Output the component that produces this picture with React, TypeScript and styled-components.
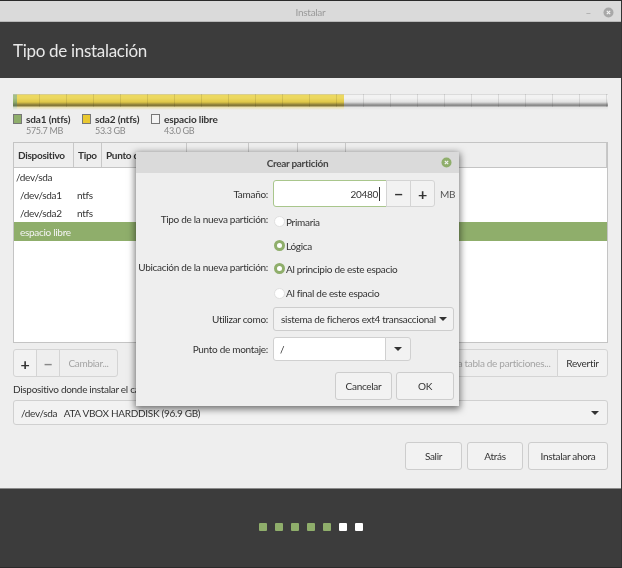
import styled, { createGlobalStyle } from "styled-components";

const GlobalStyle = createGlobalStyle`
    html, body {
        margin: 0;
        padding: 0;
        background: #eeeeee;
    }
    body {
        font-family: Lato, "Noto Sans", "Liberation Sans", sans-serif;
        font-size: 10px;
        letter-spacing: -0.3px;
        color: #333333;
    }
`;

const Window = styled.div`
    position: relative;
    width: 622px;
    height: 568px;
    box-sizing: border-box;
    overflow: hidden;
    display: flex;
    flex-direction: column;
    border-top: 1px solid #2a2a2a;
    border-right: 1px solid #333;
    filter: blur(0.3px);
`;

const TitleBar = styled.div`
    height: 21px;
    flex: none;
    display: flex;
    align-items: center;
    justify-content: center;
    position: relative;
    box-sizing: border-box;
    padding-top: 1px;
    background: #dadada;
    border-bottom: 1px solid #b8b8b8;
    color: #9a9a9a;
`;

const TitleButtons = styled.div`
    position: absolute;
    right: 7px;
    top: 5px;
    display: flex;
    align-items: center;
    gap: 12px;
    color: #a0a0a0;
`;

const Header = styled.div`
    height: 56px;
    flex: none;
    display: flex;
    align-items: center;
    padding: 1px 0 0 13px;
    box-sizing: border-box;
    background: #3c3c3c;
    color: #e8e8e8;
    font-size: 17px;
`;

const Content = styled.div`
    flex: 1;
    display: flex;
    flex-direction: column;
    padding: 16px 13px 0;
    background: #eeeeee;
`;

const Bar = styled.div`
    position: relative;
    display: flex;
    height: 16px;
    flex: none;

    &::after {
        content: "";
        position: absolute;
        inset: 0 0 3px;
        background: repeating-linear-gradient(90deg, transparent 0 13px, rgba(0, 0, 0, 0.1) 13px 13.5px);
    }
`;

const BarPart = styled.div<{ $w: number; $top: string; $mid: string; $dark: string; $fade: string }>`
    width: ${(p) => p.$w}px;
    flex: ${(p) => (p.$w ? "none" : 1)};
    background: linear-gradient(
        180deg,
        #c4c4c4 0,
        ${(p) => p.$top} 1px,
        ${(p) => p.$top} 4px,
        ${(p) => p.$mid} 8px,
        ${(p) => p.$dark} 11px,
        ${(p) => p.$dark} 12px,
        ${(p) => p.$fade} 13px,
        transparent 16px
    );
`;

const Legend = styled.div`
    display: flex;
    gap: 10px;
    margin-top: 2px;
    height: 30px;
    flex: none;
`;

const LegendItem = styled.div<{ $w: number }>`
    display: flex;
    gap: 4px;
    width: ${(p) => p.$w}px;
`;

const Swatch = styled.div<{ $color: string }>`
    width: 9px;
    height: 10px;
    margin-top: 2px;
    box-sizing: border-box;
    flex: none;
    background: ${(p) => p.$color};
    border: 1px solid #777;
`;

const LegendName = styled.div`
    font-weight: 700;
    line-height: 14px;
    letter-spacing: -0.15px;
    white-space: nowrap;
`;

const LegendSize = styled.div`
    font-size: 9px;
    line-height: 10px;
    color: #888;
`;

const Table = styled.div`
    height: 201px;
    flex: none;
    display: flex;
    flex-direction: column;
    background: #fff;
    border: 1px solid #c4c4c4;
    box-sizing: border-box;
`;

const TableHead = styled.div`
    display: flex;
    height: 24px;
    flex: none;
    background: #eeeeee;
    border-bottom: 1px solid #c4c4c4;
`;

const HeadCell = styled.div<{ $w?: number }>`
    width: ${(p) => (p.$w ? `${p.$w}px` : "auto")};
    flex: ${(p) => (p.$w ? "none" : 1)};
    box-sizing: border-box;
    padding-left: 4px;
    display: flex;
    align-items: center;
    font-weight: 700;
    white-space: nowrap;
    overflow: hidden;
    border-right: 1px solid #c8c8c8;
`;

const Row = styled.div<{ $selected?: boolean }>`
    display: flex;
    align-items: center;
    height: ${(p) => (p.$selected ? 19 : 18)}px;
    flex: none;
    background: ${(p) => (p.$selected ? "#8fae6b" : "transparent")};
    color: ${(p) => (p.$selected ? "#f4f4f4" : "#333333")};
`;

const Device = styled.div<{ $indent?: boolean }>`
    width: 63px;
    flex: none;
    box-sizing: border-box;
    padding-left: ${(p) => (p.$indent ? "6px" : "2px")};
    white-space: nowrap;
`;

const Toolbar = styled.div`
    display: flex;
    justify-content: space-between;
    margin-top: 6px;
    height: 28px;
    flex: none;
`;

const Group = styled.div`
    display: flex;
`;

const ToolButton = styled.div<{ $w: number; $off?: boolean; $first?: boolean; $last?: boolean }>`
    width: ${(p) => p.$w}px;
    box-sizing: border-box;
    display: flex;
    align-items: center;
    justify-content: center;
    white-space: nowrap;
    background: ${(p) => (p.$off ? "#eeeeee" : "#f2f2f2")};
    color: ${(p) => (p.$off ? "#a4a4a4" : "#333333")};
    border: 1px solid #d4d4d4;
    margin-left: ${(p) => (p.$first ? "0" : "-1px")};
    border-radius: ${(p) => (p.$first ? "3px 0 0 3px" : p.$last ? "0 3px 3px 0" : "0")};
`;

const Sign = styled.span<{ $off?: boolean }>`
    font-size: 16px;
    font-weight: 700;
    color: ${(p) => (p.$off ? "#888" : "#333")};
`;

const DeviceLabel = styled.div`
    margin-top: 4px;
    height: 17px;
    line-height: 17px;
    flex: none;
    white-space: nowrap;
`;

const Combo = styled.div`
    margin-top: 2px;
    height: 25px;
    flex: none;
    box-sizing: border-box;
    display: flex;
    align-items: center;
    justify-content: space-between;
    padding: 1px 8px 0 7px;
    background: #f2f2f2;
    border: 1px solid #d0d0d0;
    border-radius: 3px;
`;

const Arrow = styled.span`
    width: 0;
    height: 0;
    flex: none;
    border-left: 4px solid transparent;
    border-right: 4px solid transparent;
    border-top: 4px solid #333;
`;

const Actions = styled.div`
    display: flex;
    justify-content: flex-end;
    gap: 5px;
    margin-top: 17px;
    height: 28px;
    flex: none;
`;

const Button = styled.div<{ $w: number }>`
    width: ${(p) => p.$w}px;
    box-sizing: border-box;
    display: flex;
    align-items: center;
    justify-content: center;
    background: #f2f2f2;
    border: 1px solid #cdcdcd;
    border-radius: 3px;
`;

const Footer = styled.div`
    height: 80px;
    flex: none;
    display: flex;
    align-items: center;
    justify-content: center;
    gap: 8px;
    padding-bottom: 2px;
    box-sizing: border-box;
    background: #3c3c3c;
    border-top: 1px solid #8a8a8a;
    border-bottom: 1px solid #2a2a2a;
`;

const Dot = styled.div<{ $done?: boolean }>`
    width: 8px;
    height: 8px;
    border-radius: 1px;
    background: ${(p) => (p.$done ? "#8fae6b" : "#ffffff")};
`;

const Dialog = styled.div`
    position: absolute;
    left: 136px;
    top: 151px;
    width: 323px;
    height: 254px;
    display: flex;
    flex-direction: column;
    background: #eeeeee;
    box-shadow: 0 2px 7px 1px rgba(0, 0, 0, 0.55);
`;

const DialogTitle = styled.div`
    height: 21px;
    flex: none;
    position: relative;
    display: flex;
    align-items: center;
    justify-content: center;
    background: #dadada;
    font-weight: 700;
    color: #444;
`;

const DialogClose = styled.svg`
    position: absolute;
    right: 7px;
    top: 5px;
`;

const Form = styled.div`
    display: flex;
    flex-direction: column;
    padding: 7px 5px 0;
`;

const FormRow = styled.div<{ $h: number }>`
    display: flex;
    gap: 5px;
    height: ${(p) => p.$h}px;
    flex: none;
`;

const Label = styled.div<{ $raise?: number }>`
    width: 127px;
    flex: none;
    display: flex;
    align-items: center;
    justify-content: flex-end;
    white-space: nowrap;
    padding-bottom: ${(p) => p.$raise ?? 0}px;
    box-sizing: border-box;
`;

const Field = styled.div`
    display: flex;
    align-items: center;
    flex: 1;
`;

const Input = styled.div`
    width: 114px;
    height: 27px;
    box-sizing: border-box;
    display: flex;
    align-items: center;
    justify-content: flex-end;
    padding-right: 6px;
    background: #fff;
    border: 1px solid #a9c68c;
    border-radius: 3px 0 0 3px;
`;

const Caret = styled.span`
    width: 1px;
    height: 14px;
    margin-left: 1px;
    background: #333;
`;

const Stepper = styled.div<{ $last?: boolean }>`
    width: 25px;
    height: 27px;
    box-sizing: border-box;
    display: flex;
    align-items: center;
    justify-content: center;
    margin-left: -1px;
    background: #f2f2f2;
    border: 1px solid #d4d4d4;
    border-radius: ${(p) => (p.$last ? "0 3px 3px 0" : "0")};
`;

const Unit = styled.span`
    margin-left: 5px;
    color: #555;
`;

const Radio = styled.span<{ $on?: boolean }>`
    width: 11px;
    height: 11px;
    flex: none;
    margin-left: 1px;
    margin-right: 1px;
    border-radius: 50%;
    box-sizing: border-box;
    background: #fff;
    border: ${(p) => (p.$on ? "3px solid #8fae6b" : "1px solid #e0e0e0")};
`;

const Select = styled.div`
    width: 181px;
    height: 24px;
    box-sizing: border-box;
    display: flex;
    align-items: center;
    justify-content: space-between;
    padding: 0 6px 0 7px;
    background: #f2f2f2;
    border: 1px solid #cdcdcd;
    border-radius: 3px;
    white-space: nowrap;
`;

const MountInput = styled.div`
    width: 113px;
    height: 24px;
    box-sizing: border-box;
    display: flex;
    align-items: center;
    padding-left: 6px;
    background: #fff;
    border: 1px solid #d0d0d0;
    border-radius: 3px 0 0 3px;
`;

const MountArrow = styled.div`
    width: 26px;
    height: 24px;
    box-sizing: border-box;
    display: flex;
    align-items: center;
    justify-content: center;
    margin-left: -1px;
    background: #f2f2f2;
    border: 1px solid #d0d0d0;
    border-radius: 0 3px 3px 0;
`;

const DialogActions = styled.div`
    display: flex;
    justify-content: flex-end;
    gap: 4px;
    margin-top: 8px;
    height: 28px;
`;

const columns = [
    { name: "Dispositivo", w: 60 },
    { name: "Tipo", w: 28 },
    { name: "Punto de montaje", w: 85 },
    { name: "Formatear?", w: 62 },
    { name: "Tamaño", w: 49 },
    { name: "Usado", w: 48 },
];

const rows = [
    { device: "/dev/sda", type: "" },
    { device: "/dev/sda1", type: "ntfs", indent: true },
    { device: "/dev/sda2", type: "ntfs", indent: true },
    { device: "espacio libre", type: "", indent: true, selected: true },
];

function CloseIcon({ bg }: { bg: string }) {
    return (
        <svg width="11" height="11" viewBox="0 0 11 11">
            <circle cx="5.5" cy="5.5" r="5" fill={bg} />
            <path d="M3.8 3.8l3.4 3.4M7.2 3.8l-3.4 3.4" stroke="#f2f2f2" strokeWidth="1.2" />
        </svg>
    );
}

export default function App() {
    return (
        <Window>
            <GlobalStyle />
            <TitleBar>
                Instalar
                <TitleButtons>
                    <span>–</span>
                    <CloseIcon bg="#a8a8a8" />
                </TitleButtons>
            </TitleBar>
            <Header>Tipo de instalación</Header>
            <Content>
                <Bar>
                    <BarPart $w={4} $top="#a5bf87" $mid="#8fae6b" $dark="#6c7e58" $fade="rgba(150, 175, 120, 0.4)" />
                    <BarPart $w={327} $top="#ecd860" $mid="#e0c848" $dark="#857838" $fade="rgba(230, 205, 90, 0.45)" />
                    <BarPart $w={0} $top="#f2f2f2" $mid="#e0e0e0" $dark="#8a8a8a" $fade="rgba(215, 215, 215, 0.5)" />
                </Bar>
                <Legend>
                    <LegendItem $w={59}>
                        <Swatch $color="#8fae6b" />
                        <div>
                            <LegendName>sda1 (ntfs)</LegendName>
                            <LegendSize>575.7 MB</LegendSize>
                        </div>
                    </LegendItem>
                    <LegendItem $w={59}>
                        <Swatch $color="#e9c830" />
                        <div>
                            <LegendName>sda2 (ntfs)</LegendName>
                            <LegendSize>53.3 GB</LegendSize>
                        </div>
                    </LegendItem>
                    <LegendItem $w={70}>
                        <Swatch $color="#f4f4f4" />
                        <div>
                            <LegendName>espacio libre</LegendName>
                            <LegendSize>43.0 GB</LegendSize>
                        </div>
                    </LegendItem>
                </Legend>
                <Table>
                    <TableHead>
                        {columns.map((c) => (
                            <HeadCell key={c.name} $w={c.w}>
                                {c.name}
                            </HeadCell>
                        ))}
                        <HeadCell>Sistema</HeadCell>
                    </TableHead>
                    {rows.map((r) => (
                        <Row key={r.device} $selected={r.selected}>
                            <Device $indent={r.indent}>{r.device}</Device>
                            {r.type}
                        </Row>
                    ))}
                </Table>
                <Toolbar>
                    <Group>
                        <ToolButton $w={24} $first>
                            <Sign>+</Sign>
                        </ToolButton>
                        <ToolButton $w={24} $off>
                            <Sign $off>−</Sign>
                        </ToolButton>
                        <ToolButton $w={59} $off $last>
                            Cambiar...
                        </ToolButton>
                    </Group>
                    <Group>
                        <ToolButton $w={130} $off $first>
                            Nueva tabla de particiones...
                        </ToolButton>
                        <ToolButton $w={51} $last>
                            Revertir
                        </ToolButton>
                    </Group>
                </Toolbar>
                <DeviceLabel>Dispositivo donde instalar el cargador de arranque:</DeviceLabel>
                <Combo>
                    <span>/dev/sda&nbsp;&nbsp; ATA VBOX HARDDISK (96.9 GB)</span>
                    <Arrow />
                </Combo>
                <Actions>
                    <Button $w={57}>Salir</Button>
                    <Button $w={56}>Atrás</Button>
                    <Button $w={80}>Instalar ahora</Button>
                </Actions>
            </Content>
            <Footer>
                {[1, 2, 3, 4, 5].map((n) => (
                    <Dot key={n} $done />
                ))}
                <Dot />
                <Dot />
            </Footer>
            <Dialog>
                <DialogTitle>
                    Crear partición
                    <DialogClose width="11" height="11" viewBox="0 0 11 11">
                        <circle cx="5.5" cy="5.5" r="5" fill="#8fae6b" />
                        <path d="M3.8 3.8l3.4 3.4M7.2 3.8l-3.4 3.4" stroke="#f2f2f2" strokeWidth="1.2" />
                    </DialogClose>
                </DialogTitle>
                <Form>
                    <FormRow $h={27}>
                        <Label>Tamaño:</Label>
                        <Field>
                            <Input>
                                20480
                                <Caret />
                            </Input>
                            <Stepper>
                                <Sign>−</Sign>
                            </Stepper>
                            <Stepper $last>
                                <Sign>+</Sign>
                            </Stepper>
                            <Unit>MB</Unit>
                        </Field>
                    </FormRow>
                    <FormRow $h={29}>
                        <Label $raise={5}>Tipo de la nueva partición:</Label>
                        <Field>
                            <Radio />
                            Primaria
                        </Field>
                    </FormRow>
                    <FormRow $h={19}>
                        <Label />
                        <Field>
                            <Radio $on />
                            Lógica
                        </Field>
                    </FormRow>
                    <FormRow $h={27}>
                        <Label $raise={3}>Ubicación de la nueva partición:</Label>
                        <Field>
                            <Radio $on />
                            Al principio de este espacio
                        </Field>
                    </FormRow>
                    <FormRow $h={22}>
                        <Label />
                        <Field>
                            <Radio />
                            Al final de este espacio
                        </Field>
                    </FormRow>
                    <FormRow $h={30}>
                        <Label>Utilizar como:</Label>
                        <Field>
                            <Select>
                                sistema de ficheros ext4 transaccional
                                <Arrow />
                            </Select>
                        </Field>
                    </FormRow>
                    <FormRow $h={30}>
                        <Label>Punto de montaje:</Label>
                        <Field>
                            <MountInput>/</MountInput>
                            <MountArrow>
                                <Arrow />
                            </MountArrow>
                        </Field>
                    </FormRow>
                    <DialogActions>
                        <Button $w={57}>Cancelar</Button>
                        <Button $w={58}>OK</Button>
                    </DialogActions>
                </Form>
            </Dialog>
        </Window>
    );
}
